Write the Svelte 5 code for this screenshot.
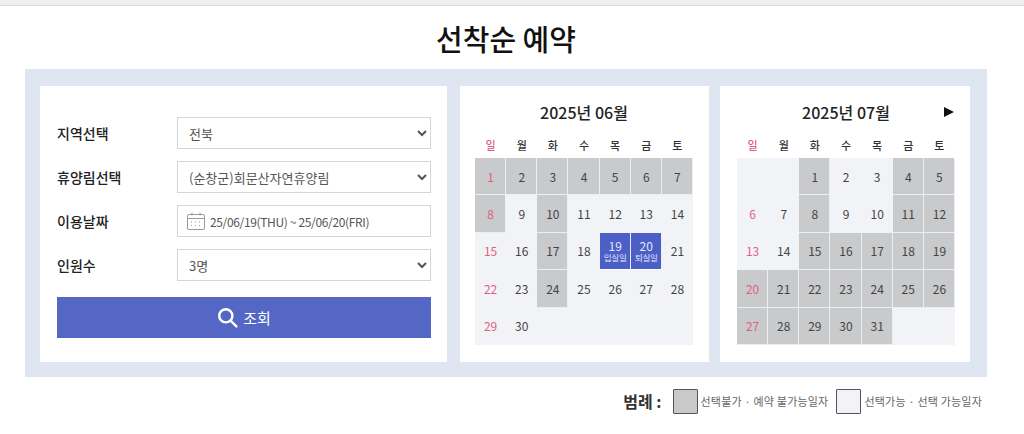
<script>
	const dayNames = ['일', '월', '화', '수', '목', '금', '토'];

	// builds the cell list for a month, first = weekday of the 1st
	function buildMonth(first, total, blocked, picked = {}) {
		const cells = [];
		for (let i = 0; i < first; i++) cells.push({ empty: true });
		for (let d = 1; d <= total; d++) {
			const col = cells.length % 7;
			cells.push({ day: d, sunday: col === 0, blocked: blocked.includes(d), note: picked[d] });
		}
		while (cells.length % 7) cells.push({ empty: true });
		return cells;
	}

	const range = (a, b) => Array.from({ length: b - a + 1 }, (_, i) => a + i);

	const months = [
		{
			title: '2025년 06월',
			cells: buildMonth(0, 30, [...range(1, 8), 10, 17, 24], { 19: '입실일', 20: '퇴실일' })
		},
		{
			title: '2025년 07월',
			next: true,
			cells: buildMonth(2, 31, [1, 4, 5, 8, 11, 12, ...range(15, 31)])
		}
	];
</script>

<div class="topbar"></div>

<main>
	<h1>선착순 예약</h1>

	<section class="panel">
		<form class="card search" on:submit|preventDefault>
			<div class="row">
				<label for="region">지역선택</label>
				<select id="region"><option>전북</option></select>
			</div>
			<div class="row">
				<label for="forest">휴양림선택</label>
				<select id="forest"><option>(순창군)회문산자연휴양림</option></select>
			</div>
			<div class="row">
				<label for="dates">이용날짜</label>
				<div class="date" id="dates">
					<svg width="20" height="20" viewBox="0 0 20 20" fill="none" stroke="#9a9a9a" stroke-width="1">
						<rect x="1.5" y="3.5" width="17" height="15" rx="1.5" />
						<path d="M1.5 7.5h17M6 1.5v3M14 1.5v3" />
						<path d="M5 11h2M9 11h2M13 11h2M5 14.5h2M9 14.5h2M13 14.5h2" stroke-dasharray="1 1" />
					</svg>
					<span>25/06/19(THU) ~ 25/06/20(FRI)</span>
				</div>
			</div>
			<div class="row">
				<label for="people">인원수</label>
				<select id="people"><option>3명</option></select>
			</div>
			<button type="submit">
				<svg width="21" height="21" viewBox="0 0 21 21" fill="none" stroke="#fff" stroke-width="2.4">
					<circle cx="8.8" cy="8.8" r="6.6" />
					<path d="M13.6 13.6l5.8 5.8" stroke-linecap="round" />
				</svg>
				조회
			</button>
		</form>

		{#each months as month}
			<div class="card calendar">
				<div class="cal-head">
					<strong>{month.title}</strong>
					{#if month.next}<span class="next"></span>{/if}
				</div>
				<div class="grid names">
					{#each dayNames as name, i}
						<span class:sun={i === 0}>{name}</span>
					{/each}
				</div>
				<div class="grid days">
					{#each month.cells as cell}
						<div
							class="cell"
							class:blocked={cell.blocked}
							class:picked={cell.note}
							class:sun={cell.sunday}
						>
							{#if cell.day}<span>{cell.day}</span>{/if}
							{#if cell.note}<small>{cell.note}</small>{/if}
						</div>
					{/each}
				</div>
			</div>
		{/each}
	</section>

	<div class="legend">
		<b>범례 :</b>
		<i class="swatch off"></i>
		<span>선택불가 · 예약 불가능일자</span>
		<i class="swatch on"></i>
		<span>선택가능 · 선택 가능일자</span>
	</div>
</main>

<style>
	:global(body) {
		margin: 0;
		background: #fff;
		font-family: 'Noto Sans CJK KR', 'Noto Sans', sans-serif;
		color: #222;
	}

	.topbar {
		height: 5px;
		background: #eeeff0;
		border-bottom: 1px solid #dcdde0;
	}

	main {
		padding-left: 25px;
		width: 962px;
	}

	h1 {
		margin: 0;
		height: 63px;
		line-height: 64px;
		font-size: 29px;
		font-weight: 500;
		text-align: center;
		color: #111;
	}

	.panel {
		display: flex;
		height: 308px;
		box-sizing: border-box;
		padding: 17px 17px 15px 15px;
		background: #dfe6f1;
		gap: 12px;
	}

	.card {
		background: #fff;
		box-sizing: border-box;
	}

	.search {
		width: 407px;
		margin-right: 1px;
		padding: 31px 16px 0 17px;
	}

	.row {
		display: flex;
		align-items: center;
		height: 32px;
		margin-bottom: 12px;
	}

	label {
		width: 120px;
		flex: none;
		font-size: 14px;
		font-weight: 500;
		color: #222;
	}

	select,
	.date {
		flex: 1;
		height: 32px;
		box-sizing: border-box;
		border: 1px solid #d5d5d5;
		background: #fff;
		font: inherit;
		font-size: 13px;
		color: #555;
	}

	select {
		padding-left: 7px;
	}

	.date {
		display: flex;
		align-items: center;
		gap: 4px;
		padding-left: 8px;
		font-size: 12px;
		letter-spacing: -0.35px;
	}

	button {
		display: flex;
		align-items: center;
		justify-content: center;
		gap: 5px;
		width: 100%;
		height: 41px;
		margin-top: 16px;
		border: none;
		background: #5567c4;
		color: #fff;
		font: inherit;
		font-size: 15px;
		padding-right: 6px;
	}

	.calendar {
		width: 249px;
		padding: 0 16px 0 15px;
	}

	.calendar:last-child {
		width: 250px;
		margin-left: -1px;
		padding: 0 15px 0 17px;
	}

	.cal-head {
		position: relative;
		height: 52px;
		line-height: 52px;
		text-align: center;
		font-size: 16px;
	}

	.cal-head strong {
		font-weight: 500;
		color: #222;
	}

	.next {
		position: absolute;
		right: 1px;
		top: 21px;
		border-left: 10px solid #111;
		border-top: 5.5px solid transparent;
		border-bottom: 5.5px solid transparent;
	}

	.grid {
		display: grid;
		grid-template-columns: repeat(7, 1fr);
	}

	.names {
		height: 20px;
		line-height: 14px;
		text-align: center;
		font-size: 11px;
		font-weight: 500;
		color: #333;
	}

	.names .sun,
	.cell.sun {
		color: #e0607f;
	}

	.days {
		grid-auto-rows: 37.4px;
	}

	.cell {
		display: flex;
		flex-direction: column;
		align-items: center;
		justify-content: center;
		background: #f2f3f7;
		font-size: 12px;
		color: #444;
		line-height: 12px;
	}

	.cell.blocked {
		background: #c9cacc;
		box-shadow: inset -1px -1px 0 #eceef3;
	}

	.cell.picked {
		background: #4c5fc6;
		color: #e4e8fb;
		box-shadow: inset -1px 0 0 #eceef3;
		margin-bottom: 1px;
	}

	small {
		font-size: 8.5px;
		line-height: 10px;
		letter-spacing: -0.3px;
	}

	.legend {
		display: flex;
		align-items: center;
		justify-content: flex-end;
		margin: 11px 5px 0 0;
		height: 26px;
		font-size: 11px;
		letter-spacing: 0.2px;
		color: #666;
	}

	.legend b {
		font-size: 16px;
		font-weight: 700;
		letter-spacing: 0;
		color: #333;
		margin-right: 11px;
	}

	.swatch {
		width: 25px;
		height: 25px;
		box-sizing: border-box;
		border: 1px solid #555;
		margin-right: 3px;
		border-radius: 1px;
	}

	.swatch.off {
		background: #c9c9c9;
	}

	.swatch.on {
		background: #f2f3f7;
		margin-left: 8px;
	}
</style>
